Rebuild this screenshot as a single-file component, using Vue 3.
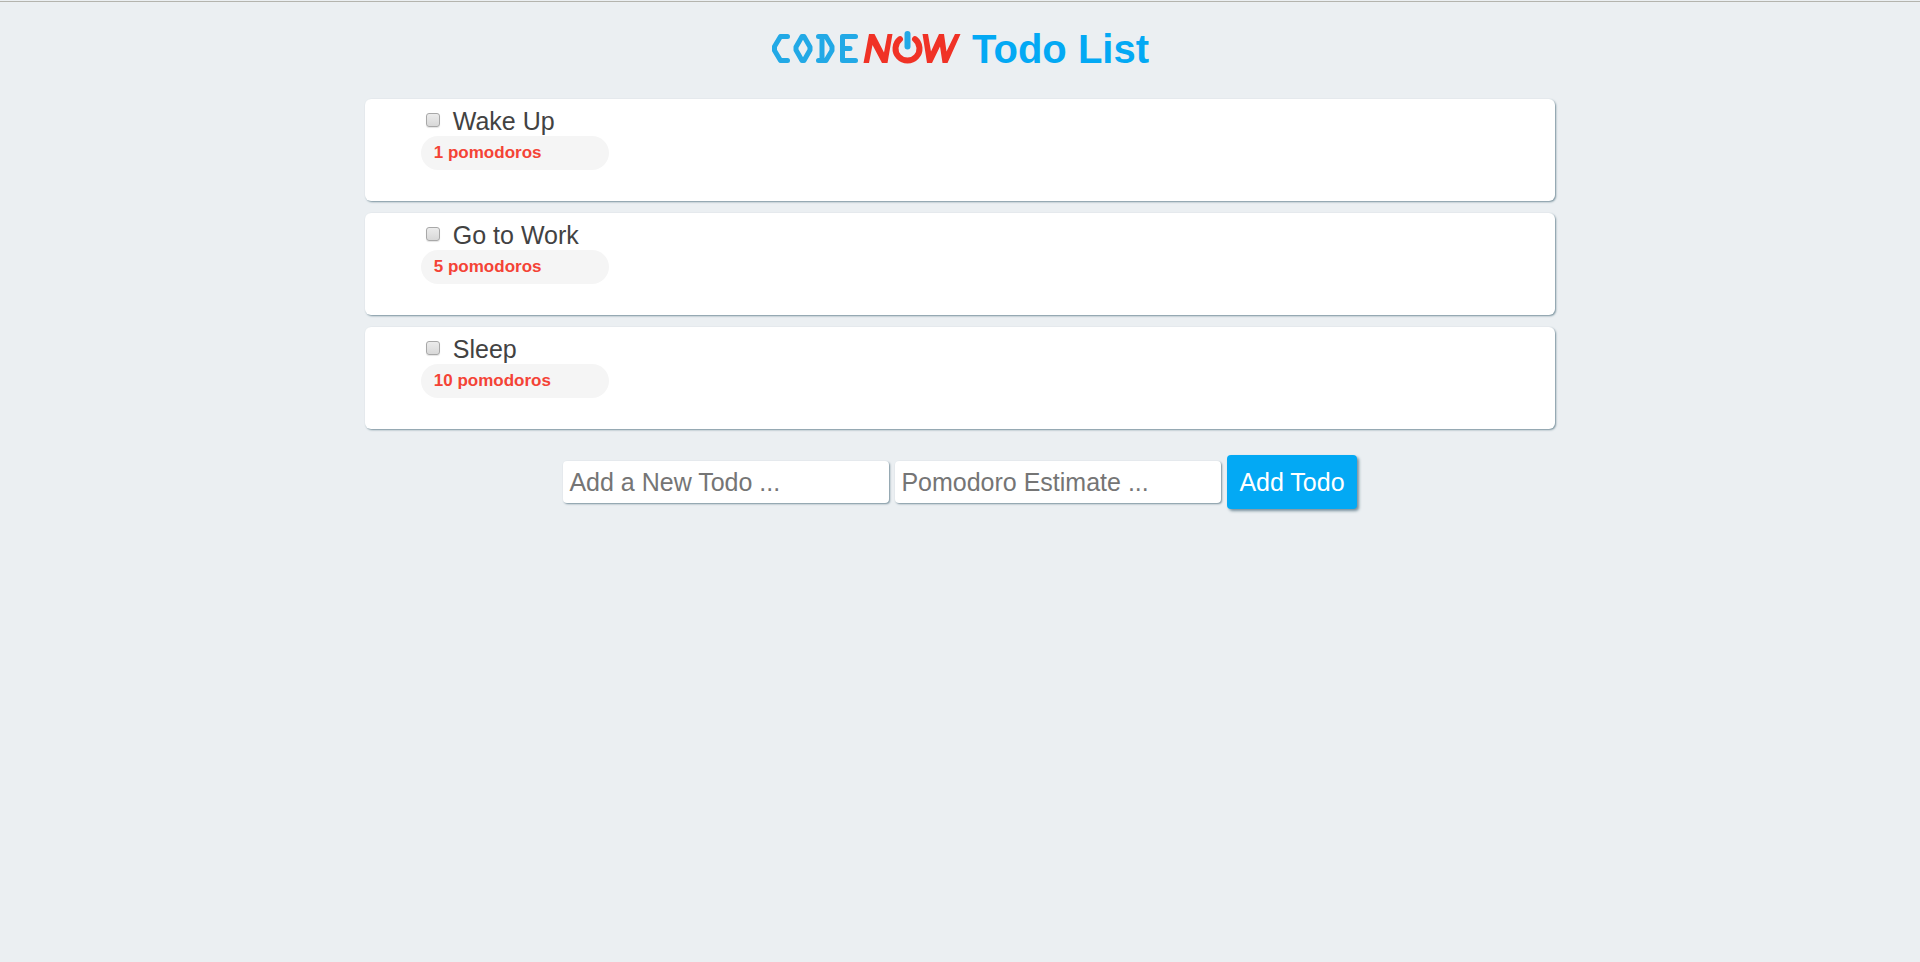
<script setup>
import { ref } from 'vue'

const todos = ref([
  { id: 1, text: 'Wake Up', estimate: 1, done: false },
  { id: 2, text: 'Go to Work', estimate: 5, done: false },
  { id: 3, text: 'Sleep', estimate: 10, done: false },
])
const newTodo = ref('')
const newEstimate = ref('')

function addTodo() {
  if (!newTodo.value) return
  todos.value.push({
    id: Date.now(),
    text: newTodo.value,
    estimate: Number(newEstimate.value) || 1,
    done: false,
  })
  newTodo.value = ''
  newEstimate.value = ''
}
</script>

<template>
  <div class="page">
    <header class="header">
      <svg class="logo" viewBox="0 0 190 36" role="img" aria-label="CodeNow">
        <g fill="none" stroke="#22a9e6" stroke-width="5" stroke-linecap="round" stroke-linejoin="round">
          <path d="M16.500 5.500H9.500L3.500 15.500V19.500L9.500 29.500H16.500" />
          <path d="M31 5.500H33L39 16V19L33 29.500H31L25 19V16Z" />
          <path d="M47.500 5.500H55L61 15.500V19.500L55 29.500H47.500M51 5.500V29.500" />
          <path d="M84.500 5.500H71.500V29.500H84.500M71.500 17.500H79" />
        </g>
        <path fill="none" stroke="#f03226" stroke-width="6" stroke-linecap="round" d="M144 8.200A12 12 0 1 1 129 8.200" />
        <path fill="#f03226" d="M92.500 32L98 3H103.500L113 21.500L116.500 3H121.500L116.500 32H111L101.500 14L98 32Z" />
        <path fill="#f03226" d="M151.500 3H157L160 20.500L168 3H173L175.500 20.500L184 3H189.500L176.500 32H171.500L169 15.500L161 32H156Z" />
        <path fill="none" stroke="#22a9e6" stroke-width="6" stroke-linecap="round" d="M136.500 3V15.500" />
      </svg>
      <h1 class="title">Todo List</h1>
    </header>

    <main class="content">
      <ul class="todos">
        <li v-for="todo in todos" :key="todo.id" class="todo">
          <label class="task">
            <input v-model="todo.done" type="checkbox" class="check" />
            <span>{{ todo.text }}</span>
          </label>
          <div class="estimate">{{ todo.estimate }} pomodoros</div>
        </li>
      </ul>

      <form class="new-todo" @submit.prevent="addTodo">
        <input v-model="newTodo" class="field" type="text" placeholder="Add a New Todo ..." aria-label="New todo" />
        <input v-model="newEstimate" class="field" type="text" placeholder="Pomodoro Estimate ..." aria-label="Pomodoro estimate" />
        <button class="add" type="submit">Add Todo</button>
      </form>
    </main>
  </div>
</template>

<style>
body {
  background: #ebeff2;
}
</style>

<style scoped>
.page {
  padding: 23px 0 24px;
  border-top: 1px solid #b4b4ae;
  margin-top: 1px;
  font-family: Arial, "Liberation Sans", sans-serif;
  font-size: 25px;
  color: #424242;
}

.header {
  display: flex;
  justify-content: center;
  align-items: center;
  gap: 11px;
  height: 48px;
}

.logo {
  width: 190px;
  height: 36px;
}

.title {
  margin: 0;
  font-size: 40px;
  line-height: 48px;
  color: #03a9f4;
}

.content {
  width: 62%;
  margin: 26px auto 0;
}

.todos {
  display: flex;
  flex-direction: column;
  gap: 12px;
  margin: 0;
  padding: 0;
  list-style: none;
}

.todo {
  padding: 8px 56px 31px;
  background: #fff;
  border-radius: 6px;
  box-shadow: 1px 1px 2px #78909c;
}

.task {
  display: flex;
  align-items: center;
  gap: 13px;
  padding-left: 5px;
  line-height: 29px;
}

.check {
  appearance: none;
  box-sizing: border-box;
  width: 14px;
  height: 14px;
  margin: 0 0 3px;
  border: 1px solid #a8a8a8;
  border-radius: 3px;
  background: linear-gradient(#ececec, #d8d8d8);
  box-shadow: 0 1px 1px #e4e4e4;
}

.check:checked {
  background: #03a9f4;
}

.estimate {
  box-sizing: border-box;
  width: 188px;
  padding: 0 13px;
  border-radius: 17px;
  background: #f5f5f5;
  font-size: 17px;
  font-weight: bold;
  line-height: 34px;
  color: #f44336;
}

.new-todo {
  display: flex;
  justify-content: center;
  align-items: center;
  gap: 6px;
  margin-top: 26px;
}

.field {
  box-sizing: border-box;
  width: 326px;
  height: 42px;
  padding: 0 6px;
  border: 0;
  border-radius: 4px;
  background: #fff;
  box-shadow: 1px 1px 2px #78909c;
  font: inherit;
  color: #424242;
}

.field::placeholder {
  color: #757575;
}

.add {
  padding: 0 12px;
  border: 0;
  border-radius: 4px;
  background: #03a9f4;
  box-shadow: 2px 2px 3px #78909c;
  font: inherit;
  line-height: 54px;
  color: #fff;
}
</style>
